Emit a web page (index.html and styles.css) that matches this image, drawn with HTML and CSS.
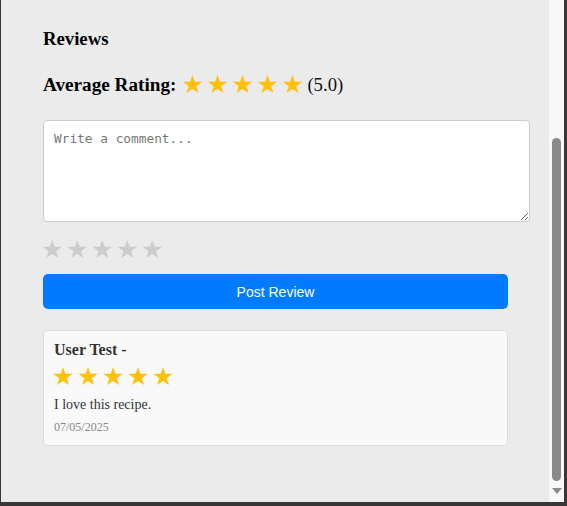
FILE: index.html
```html
<!DOCTYPE html>
<html>
<head>
<meta charset="utf-8">
<link rel="stylesheet" href="styles.css">
</head>
<body>
<div class="modal">
  <div class="content">
    <h3 class="title">Reviews</h3>
    <div class="avg">
      <span class="avg-label">Average Rating:</span>
      <span class="stars gold"><span>★</span><span>★</span><span>★</span><span>★</span><span>★</span></span>
      <span class="avg-val">(5.0)</span>
    </div>
    <textarea class="comment" placeholder="Write a comment..."></textarea>
    <div class="stars gray input-stars"><span>★</span><span>★</span><span>★</span><span>★</span><span>★</span></div>
    <button class="post">Post Review</button>
    <div class="card">
      <div class="user">User Test -</div>
      <div class="stars gold card-stars"><span>★</span><span>★</span><span>★</span><span>★</span><span>★</span></div>
      <div class="text">I love this recipe.</div>
      <div class="date">07/05/2025</div>
    </div>
  </div>
  <div class="scrollbar">
    <div class="track-top"></div>
    <div class="thumb"></div>
    <div class="track-bottom"></div>
    <div class="arrow"></div>
  </div>
</div>
</body>
</html>
```
FILE: styles.css
```css
html, body {
  margin: 0;
  padding: 0;
}
body {
  background: #3a3536;
  width: 567px;
  height: 506px;
  overflow: hidden;
  font-family: "Liberation Serif", "Times New Roman", serif;
}
.modal {
  margin-left: 1px;
  width: 563px;
  height: 502px;
  background: #ebebeb;
  display: flex;
}
.content {
  flex: 1;
  padding: 28px 0 0 42px;
  display: flex;
  flex-direction: column;
  align-items: flex-start;
}
.title {
  margin: 0;
  font-size: 18.72px;
  line-height: 22px;
  font-weight: bold;
  color: #000;
}
.avg {
  margin-top: 22px;
  display: flex;
  align-items: center;
  height: 26px;
}
.avg-label {
  font-size: 19.2px;
  font-weight: bold;
  color: #000;
  margin-right: 5px;
}
.avg-val {
  font-size: 18.72px;
  color: #111;
  margin-left: 1px;
}
.stars {
  display: flex;
  font-family: "DejaVu Sans", sans-serif;
  font-size: 25px;
  line-height: 26px;
}
.stars span {
  width: 25px;
  text-align: left;
}
.gold { color: #ffc107; }
.gray { color: #cccccc; }
.comment {
  margin-top: 22px;
  width: 487px;
  height: 102px;
  box-sizing: border-box;
  border: 1px solid #cccccc;
  border-radius: 4px;
  background: #fff;
  padding: 10px;
  font-family: "DejaVu Sans Mono", monospace;
  font-size: 12.8px;
  resize: vertical;
}
.comment::placeholder {
  color: #777;
}
.input-stars {
  margin-top: 15px;
  margin-left: -2px;
  color: #cccccc;
  font-size: 25px;
}
.post {
  margin-top: 11px;
  width: 465px;
  height: 35px;
  border: none;
  border-radius: 5px;
  background: #007bff;
  color: #fff;
  font-family: "Liberation Sans", Arial, sans-serif;
  font-size: 14px;
  padding: 0;
}
.card {
  margin-top: 21px;
  width: 465px;
  height: 116px;
  box-sizing: border-box;
  background: #f9f9f9;
  border: 1px solid #dddddd;
  border-radius: 5px;
  padding: 9px 10px;
}
.user {
  font-size: 16px;
  font-weight: bold;
  color: #333;
  line-height: 20px;
}
.card-stars {
  margin-top: 4px;
  margin-left: -2px;
  font-size: 25px;
  line-height: 26px;
}
.text {
  margin-top: 6px;
  font-size: 14px;
  color: #333;
  line-height: 18px;
}
.date {
  margin-top: 5px;
  font-size: 12px;
  color: #888;
  line-height: 16px;
}
.scrollbar {
  width: 15px;
  background: #f8f8f8;
  display: flex;
  flex-direction: column;
  align-items: center;
}
.track-top {
  height: 138px;
}
.thumb {
  width: 9px;
  height: 343px;
  background: #8a8a8a;
  border-radius: 5px;
}
.track-bottom {
  height: 7px;
}
.arrow {
  width: 0;
  height: 0;
  border-left: 5px solid transparent;
  border-right: 5px solid transparent;
  border-top: 6px solid #8a8a8a;
}
```
